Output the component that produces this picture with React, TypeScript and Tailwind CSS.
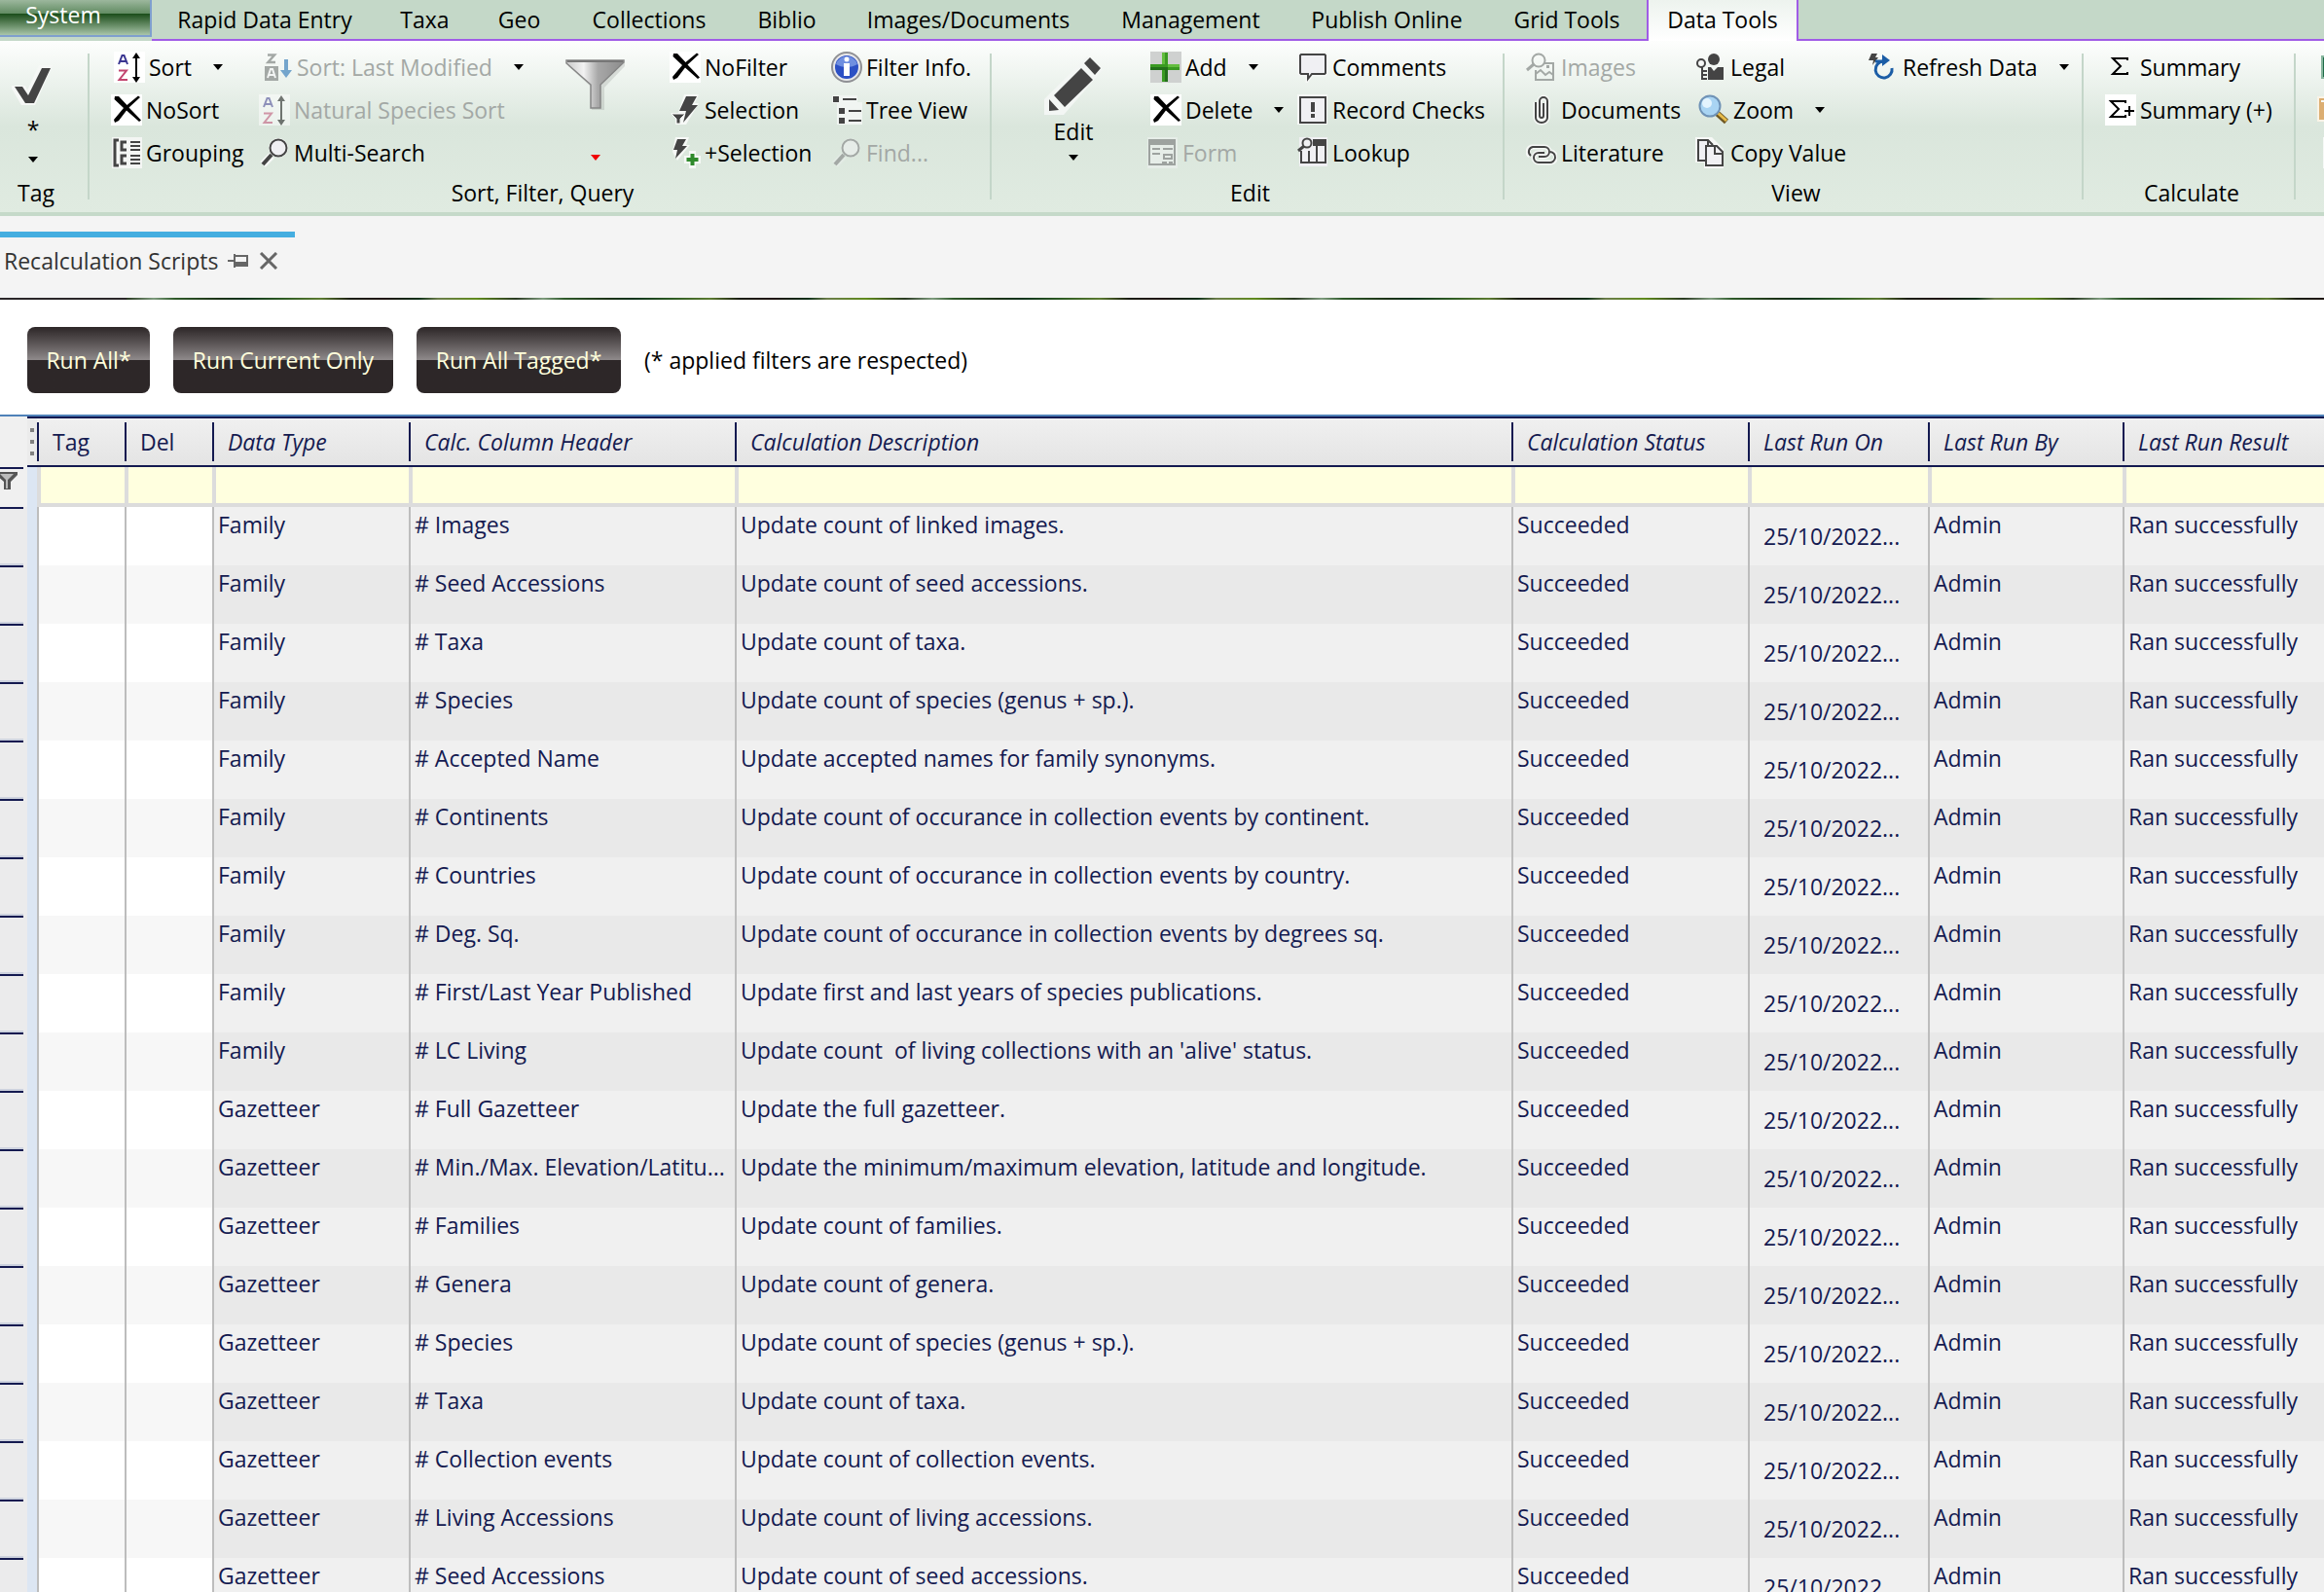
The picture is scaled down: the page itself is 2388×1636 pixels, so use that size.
import { FC, ReactNode } from 'react';

const tabs = [
  { label: 'Rapid Data Entry', width: 'w-[232px]' },
  { label: 'Taxa', width: 'w-[97px]' },
  { label: 'Geo', width: 'w-[97px]' },
  { label: 'Collections', width: 'w-[170px]' },
  { label: 'Biblio', width: 'w-[113px]' },
  { label: 'Images/Documents', width: 'w-[260px]' },
  { label: 'Management', width: 'w-[197px]' },
  { label: 'Publish Online', width: 'w-[206px]' },
  { label: 'Grid Tools', width: 'w-[164px]' },
];

const columns = [
  { label: 'Tag', width: 'w-[90px]', italic: false },
  { label: 'Del', width: 'w-[90px]', italic: false },
  { label: 'Data Type', width: 'w-[202px]', italic: true },
  { label: 'Calc. Column Header', width: 'w-[335px]', italic: true },
  { label: 'Calculation Description', width: 'w-[798px]', italic: true },
  { label: 'Calculation Status', width: 'w-[243px]', italic: true },
  { label: 'Last Run On', width: 'w-[185px]', italic: true },
  { label: 'Last Run By', width: 'w-[200px]', italic: true },
  { label: 'Last Run Result', width: '', italic: true },
];

const scripts = [
  ['Family', '# Images', 'Update count of linked images.'],
  ['Family', '# Seed Accessions', 'Update count of seed accessions.'],
  ['Family', '# Taxa', 'Update count of taxa.'],
  ['Family', '# Species', 'Update count of species (genus + sp.).'],
  ['Family', '# Accepted Name', 'Update accepted names for family synonyms.'],
  ['Family', '# Continents', 'Update count of occurance in collection events by continent.'],
  ['Family', '# Countries', 'Update count of occurance in collection events by country.'],
  ['Family', '# Deg. Sq.', 'Update count of occurance in collection events by degrees sq.'],
  ['Family', '# First/Last Year Published', 'Update first and last years of species publications.'],
  ['Family', '# LC Living', "Update count  of living collections with an 'alive' status."],
  ['Gazetteer', '# Full Gazetteer', 'Update the full gazetteer.'],
  ['Gazetteer', '# Min./Max. Elevation/Latitu...', 'Update the minimum/maximum elevation, latitude and longitude.'],
  ['Gazetteer', '# Families', 'Update count of families.'],
  ['Gazetteer', '# Genera', 'Update count of genera.'],
  ['Gazetteer', '# Species', 'Update count of species (genus + sp.).'],
  ['Gazetteer', '# Taxa', 'Update count of taxa.'],
  ['Gazetteer', '# Collection events', 'Update count of collection events.'],
  ['Gazetteer', '# Living Accessions', 'Update count of living accessions.'],
  ['Gazetteer', '# Seed Accessions', 'Update count of seed accessions.'],
];

interface IconProps {
  children: ReactNode;
}

const Icon: FC<IconProps> = ({ children }) => (
  <svg viewBox="0 0 32 32" className="size-8 shrink-0" fill="none" aria-hidden="true">
    {children}
  </svg>
);

const SortIcon = () => (
  <Icon>
    <path d="M0 0h32v32H0z" fill="#fff" />
    <path d="M5 13l3.500-9h2l3.500 9M6.500 10h6" stroke="#3a3690" strokeWidth="2" />
    <path d="M5 19.500h8L5.500 29H14" stroke="#c2456f" strokeWidth="2" />
    <path d="M23 5v23" stroke="#000" strokeWidth="2" />
    <path d="M23 1l4 6h-8zM23 32l4-6h-8z" fill="#000" />
  </Icon>
);

const SortDescIcon = () => (
  <Icon>
    <path d="M6 3.500h7L6.500 11H14" stroke="#a3a8a5" strokeWidth="2.500" />
    <path d="M3 15h14v15H3z" fill="#a3a8a5" />
    <path d="M6 27l3-9h2l3 9M7 24h6" stroke="#f3f5f4" strokeWidth="2" />
    <path d="M23 8h4v11h4l-6 8-6-8h4z" fill="#74a5cc" />
  </Icon>
);

const CrossIcon = () => (
  <Icon>
    <path d="M0 0h32v32H0z" fill="#fff" />
    <path d="M4 2h4l8.500 9L28 1.500 30 3 18.500 13.500 31 26.500 29 28 16 16.500 8 27l-4 2-1-3 10-12L3.500 5z" fill="#000" />
  </Icon>
);

const GroupingIcon = () => (
  <Icon>
    <path d="M1 0h31v32H1z" fill="#f4f6f4" />
    <path d="M8 3H4v26h4" stroke="#444" strokeWidth="3" />
    <path d="M16 5h-5v8h5M16 19h-5v8h5" stroke="#444" strokeWidth="3" />
    <path d="M20 5h10M20 9h10M20 13h10M20 19h10M20 23h10M20 27h10" stroke="#444" strokeWidth="2" />
  </Icon>
);

const SearchIcon: FC<{ muted?: boolean }> = ({ muted }) => (
  <Icon>
    <path d="M13 19L4 28" stroke={muted ? '#e3ebe5' : '#f6f8f6'} strokeWidth="8" />
    <circle cx="20" cy="11" r="10" fill={muted ? '#e3ebe5' : '#f6f8f6'} />
    <circle cx="20" cy="11" r="8.500" fill={muted ? '#e6ece8' : '#efeff2'} stroke={muted ? '#a3a8a5' : '#444'} strokeWidth="2" />
    <path d="M13 18L4 28" stroke={muted ? '#a3a8a5' : '#444'} strokeWidth="4" />
  </Icon>
);

const SelectionIcon = () => (
  <Icon>
    <path d="M15 0h15l-4 9h4L17 31H6v-7l-5-5h8z" fill="#f6f8f6" />
    <path d="M17 2h11l-5 9h6L14 29l3-12h-7z" fill="#444" />
    <path d="M2 20h14l-5 5v5H7v-5z" fill="#444" stroke="#f6f8f6" strokeWidth="1" />
  </Icon>
);

const AddSelectionIcon = () => (
  <Icon>
    <path d="M6 0h14l-3 8h4L8 24l-5-9z" fill="#f6f8f6" />
    <path d="M8 2h9l-4 7h5L6 22l2-9H4z" fill="#444" />
    <path d="M20 14h7v5h5v8h-5v5h-7v-5h-5v-8h5z" fill="#f6f8f6" />
    <path d="M23.500 17v12M17.500 23h12" stroke="#2f8a2c" strokeWidth="4" />
  </Icon>
);

const InfoIcon = () => (
  <Icon>
    <circle cx="16" cy="16" r="15" fill="#e8e8ea" stroke="#8f9094" strokeWidth="2" />
    <circle cx="16" cy="16" r="12" fill="#2c50c4" />
    <path d="M5 13a11.500 11.500 0 0122 0c-6 4-16 4-22 0z" fill="#6f8fe0" />
    <circle cx="16" cy="8" r="2.500" fill="#fff" />
    <path d="M13 12h6v13h-6z" fill="#fff" />
  </Icon>
);

const TreeIcon = () => (
  <Icon>
    <path d="M1 1h26v7h5v23H6V9H1z" fill="#f1f5f2" />
    <path d="M2 2h6v6H2zM8 14h6v6H8zM8 24h6v6H8z" fill="#444" />
    <path d="M12 5h14M18 17h13M18 27h13" stroke="#444" strokeWidth="2" />
  </Icon>
);

const AddIcon = () => (
  <Icon>
    <path d="M0 0h32v32H0z" fill="#cfd1d0" />
    <path d="M12 1h6v30h-6z" fill="#3a9a22" />
    <path d="M0 13h30v6H0z" fill="#3a9a22" />
    <path d="M0 16h18v3H0zM15 16h3v15h-3z" fill="#23701a" />
    <path d="M18 13h12v3H18zM12 1h3v12h-3z" fill="#63bd3f" />
  </Icon>
);

const FormIcon = () => (
  <Icon>
    <path d="M0 0h31v32H0z" fill="#e6ede8" />
    <path d="M2 3h26v25H2z" stroke="#9da29f" strokeWidth="2" />
    <path d="M1 2h28v6H1z" fill="#9da29f" />
    <path d="M5 12h8M5 17h8M16 12h10M17 18h8v4h-8zM15 26h5M22 26h4" stroke="#9da29f" strokeWidth="2" />
  </Icon>
);

const CommentIcon = () => (
  <Icon>
    <path d="M4 3h24v1l1 1v17l-1 1H15l-4 5v-5H4l-1-1V4z" stroke="#f6f8f6" strokeWidth="5" />
    <path d="M4 3h24l1 1v18l-1 1H15l-4 5v-5H4l-1-1V4z" fill="#f0f0f3" stroke="#444" strokeWidth="2" />
  </Icon>
);

const ChecksIcon = () => (
  <Icon>
    <path d="M0 0h31v31H0z" fill="#f6f8f6" />
    <path d="M3 3h26v26H3z" fill="#f0f0f3" stroke="#444" strokeWidth="2" />
    <path d="M14 8h4v10h-4zM14 20h4v4h-4z" fill="#444" />
  </Icon>
);

const LookupIcon = () => (
  <Icon>
    <path d="M2 0h29v30H2z" fill="#f0f0f3" />
    <path d="M16 2h14v7H16z" fill="#444" />
    <path d="M4 14v12h25V8M12 14v12M20 9v17" stroke="#444" strokeWidth="2" />
    <circle cx="10" cy="6" r="4.500" stroke="#444" strokeWidth="2" />
    <path d="M7 9l-6 5" stroke="#444" strokeWidth="3" />
  </Icon>
);

const ImagesIcon = () => (
  <Icon>
    <circle cx="13" cy="9" r="6.500" stroke="#a3a8a5" strokeWidth="2" />
    <path d="M8 13l-7 6" stroke="#a3a8a5" strokeWidth="3" />
    <path d="M19 12h9v17H10V19" stroke="#a3a8a5" strokeWidth="2" />
    <path d="M10 23l5-4 5 5 4-3 4 3" stroke="#a3a8a5" strokeWidth="2" />
    <path d="M21 14h3v3h-3z" fill="#a3a8a5" />
  </Icon>
);

const ClipIcon = () => (
  <Icon>
    <path d="M10 8v16a6 5 0 0012 0V7a4 4 0 00-8 0v15a2 2 0 004 0V9" stroke="#f6f8f6" strokeWidth="5" />
    <path d="M10 8v16a6 5 0 0012 0V7a4 4 0 00-8 0v15a2 2 0 004 0V9" stroke="#444" strokeWidth="2" />
  </Icon>
);

const LinkIcon = () => (
  <Icon>
    <path d="M4 19a5 5 0 013-9h12a5 5 0 010 10h-5" stroke="#f6f8f6" strokeWidth="5" />
    <path d="M26 15a5 5 0 01-2 11H13a5 5 0 010-10h5" stroke="#f6f8f6" strokeWidth="5" />
    <path d="M5 19a5 5 0 012-9h12a5 5 0 010 10h-6" stroke="#444" strokeWidth="2" />
    <path d="M25 15a5 5 0 01-1 11H13a5 5 0 010-10h6" stroke="#444" strokeWidth="2" />
  </Icon>
);

const LegalIcon = () => (
  <Icon>
    <circle cx="19" cy="8" r="6" fill="#444" />
    <path d="M13 16h3l3 4 4-4h6v13H13z" fill="#444" />
    <circle cx="6" cy="12" r="4" fill="#f6f8f6" stroke="#444" strokeWidth="2" />
    <path d="M7 16v13M7 20h5M7 24h5M7 28h5" stroke="#444" strokeWidth="2" />
  </Icon>
);

const ZoomIcon = () => (
  <Icon>
    <path d="M19 19l10 9" stroke="#6e5723" strokeWidth="6" />
    <path d="M20 19l9 8" stroke="#e8bc4a" strokeWidth="3" />
    <circle cx="12" cy="12" r="10.500" fill="#a9d4f3" stroke="#6f92b6" strokeWidth="2" />
    <circle cx="9" cy="9" r="5" fill="#e4f4fe" />
  </Icon>
);

const CopyIcon = () => (
  <Icon>
    <path d="M0 0h17l12 12v20H9v-6H0z" fill="#f6f8f6" />
    <path d="M10 24H3V3h10l5 5" fill="#f0f0f3" stroke="#444" strokeWidth="2" />
    <path d="M11 9h11l6 6v14H11z" fill="#f0f0f3" stroke="#444" strokeWidth="2" />
    <path d="M20 9v8h8M13 3v6" stroke="#444" strokeWidth="2" />
  </Icon>
);

const RefreshIcon = () => (
  <Icon>
    <path d="M4 2h6L8 6h3l-6 8 1-5H1z" fill="#444" />
    <path d="M16 10a8.500 8.500 0 109 7" stroke="#1b5da6" strokeWidth="3" />
    <path d="M8 10h7" stroke="#1b5da6" strokeWidth="3" />
    <path d="M15 3l8 6-8 6z" fill="#1b5da6" />
  </Icon>
);

const SigmaIcon: FC<{ plus?: boolean }> = ({ plus }) => (
  <Icon>
    <path d="M0 0h32v32H0z" fill={plus ? '#fff' : 'none'} />
    <path d={plus ? 'M21 9V7H6l8 8-8 8h15v-2' : 'M23 9V7H8l8 8-8 8h15v-2'} stroke="#000" strokeWidth="2" />
    {plus && <path d="M20 17h10M25 12v10" stroke="#000" strokeWidth="2" />}
  </Icon>
);

const ExcelIcon = () => (
  <Icon>
    <path d="M4 4h28v24H4z" fill="#86b59d" />
    <path d="M6 6h26v20H6z" fill="#1f6b48" />
  </Icon>
);

const FolderIcon = () => (
  <Icon>
    <path d="M0 2h32v26H0z" fill="#faf3e6" />
    <path d="M2 4h30v22H2z" fill="#dcae72" />
    <path d="M4 6h28v2H4z" fill="#f6f8f6" />
  </Icon>
);

const SheetIcon = () => (
  <Icon>
    <path d="M6 0h26v32H6z" fill="#f6f8f6" />
  </Icon>
);

const FunnelIcon = () => (
  <svg viewBox="0 0 64 56" className="h-14 w-16" aria-hidden="true">
    <defs>
      <linearGradient id="metal" x1="0" x2="1" y1="0" y2="0">
        <stop offset="0" stopColor="#c9c9c9" />
        <stop offset="0.3" stopColor="#f2f2f2" />
        <stop offset="0.55" stopColor="#a8a8a8" />
        <stop offset="1" stopColor="#8c8c8c" />
      </linearGradient>
    </defs>
    <path d="M4 5h58v4L41 31v23H28V31L4 9z" fill="#8b8f8c" opacity="0.25" />
    <path d="M2 3h59v2L37 28v24H27V28L2 6z" fill="url(#metal)" stroke="#858585" strokeWidth="1.500" />
    <path d="M3 4h57" stroke="#777" strokeWidth="2" />
  </svg>
);

const PencilIcon = () => (
  <svg viewBox="0 0 64 64" className="size-16" aria-hidden="true">
    <path d="M46 1l16 14-40 46H2V45z" fill="#f3f6f4" />
    <path d="M49 2l11 11-6 7-11-12zM40 13l12 12-29 28L12 41zM7 45l10 11-10 1z" fill="#444" />
  </svg>
);

const CheckIcon = () => (
  <svg viewBox="0 0 48 48" className="size-12" aria-hidden="true">
    <path d="M30 2h14L26 43H12L2 26V23h14l2 5z" fill="#f6f8f6" />
    <path d="M33 5h9L25 41h-9L5 24h8l6 9z" fill="#444" />
  </svg>
);

const Caret: FC<{ red?: boolean }> = ({ red }) => (
  <svg viewBox="0 0 10 6" className="h-[6px] w-[10px] shrink-0" aria-hidden="true">
    <path d="M0 0h10L5 6z" fill={red ? '#f00000' : '#000'} />
  </svg>
);

interface CommandProps {
  icon: ReactNode;
  label: string;
  menu?: boolean;
  disabled?: boolean;
}

const Command: FC<CommandProps> = ({ icon, label, menu, disabled }) => (
  <button
    type="button"
    className={`flex h-11 items-center gap-1 whitespace-nowrap ${menu ? 'pl-[3px]' : ''} ${disabled ? 'text-[#a3a8a5]' : 'text-black'}`}
  >
    {icon}
    <span>{label}</span>
    {menu && (
      <span className="pl-[18px]">
        <Caret />
      </span>
    )}
  </button>
);

interface GroupProps {
  label: string;
  width: string;
  children: ReactNode;
}

const Group: FC<GroupProps> = ({ label, width, children }) => (
  <>
    <section className={`flex shrink-0 flex-col pt-[5px] ${width}`}>
      <div className="flex h-[132px]">{children}</div>
      <h2 className="flex h-[38px] items-center justify-center pl-[6px]">{label}</h2>
    </section>
    <div className="mt-[13px] h-[150px] w-[2px] shrink-0 bg-[#c4d6c9]" />
  </>
);

const Column: FC<{ width?: string; children: ReactNode }> = ({ width = '', children }) => (
  <div className={`flex shrink-0 flex-col items-start ${width}`}>{children}</div>
);

const RunButton: FC<{ label: string; width: string }> = ({ label, width }) => (
  <button
    type="button"
    className={`h-[68px] rounded-lg bg-linear-to-b from-[#2d2728] from-0% via-[#8f8a8b] via-50% to-[#2d2728] to-50% text-[#ffffdc] ${width}`}
  >
    {label}
  </button>
);

const Ribbon = () => (
  <header>
    <nav className="flex h-[42px] bg-[#c4d8c8]">
      <button
        type="button"
        className="h-[38px] w-[156px] shrink-0 border-r-2 border-b-2 border-[#7f9fce] bg-linear-to-b from-[#9cb79d] from-0% via-[#5f8a60] via-40% to-[#5f8a60] to-40% text-white"
      >
        <span className="flex h-full items-center justify-center bg-linear-to-b from-transparent from-40% via-[#1c4f1c] via-40% to-[#a9c5aa] pr-6 pb-[6px]">
          System
        </span>
      </button>
      <div className="flex border-b-2 border-[#a05ce6]">
        {tabs.map((tab) => (
          <button key={tab.label} type="button" className={`h-10 shrink-0 whitespace-nowrap ${tab.width}`}>
            {tab.label}
          </button>
        ))}
      </div>
      <button type="button" className="h-[42px] w-[156px] shrink-0 border-x-2 border-[#a05ce6] bg-linear-to-b from-[#edf3ee] to-white pb-[2px]">
        Data Tools
      </button>
      <div className="grow border-b-2 border-[#a05ce6]" />
    </nav>

    <div className="flex h-[180px] overflow-hidden border-b-4 border-[#c5d9c9] bg-linear-to-b from-[#fdfefd] via-[#dae6dc] via-50% to-[#e0ebe1]">
      <Group label="Tag" width="w-[90px] pr-[22px]">
        <button type="button" className="flex w-full flex-col items-center pt-[18px]">
          <CheckIcon />
          <span className="flex h-12 items-center pb-2">*</span>
          <Caret />
        </button>
      </Group>

      <Group label="Sort, Filter, Query" width="w-[925px]">
        <div className="w-[22px] shrink-0" />
        <Column width="w-[152px]">
          <Command icon={<SortIcon />} label="Sort" menu />
          <Command icon={<CrossIcon />} label="NoSort" />
          <Command icon={<GroupingIcon />} label="Grouping" />
        </Column>
        <Column width="w-[286px]">
          <Command icon={<SortDescIcon />} label="Sort: Last Modified" menu disabled />
          <Command icon={<span className="flex opacity-50"><SortIcon /></span>} label="Natural Species Sort" disabled />
          <Command icon={<SearchIcon />} label="Multi-Search" />
        </Column>
        <button type="button" aria-label="Filter" className="mr-4 flex w-[120px] flex-col items-center justify-between pt-3 pb-[14px]">
          <FunnelIcon />
          <Caret red />
        </button>
        <Column width="w-[166px]">
          <Command icon={<CrossIcon />} label="NoFilter" />
          <Command icon={<SelectionIcon />} label="Selection" />
          <Command icon={<AddSelectionIcon />} label="+Selection" />
        </Column>
        <Column>
          <Command icon={<InfoIcon />} label="Filter Info." />
          <Command icon={<TreeIcon />} label="Tree View" />
          <Command icon={<SearchIcon muted />} label="Find..." disabled />
        </Column>
      </Group>

      <Group label="Edit" width="w-[525px]">
        <button type="button" className="mr-4 ml-6 flex w-[120px] flex-col items-center pt-[10px]">
          <PencilIcon />
          <span className="pb-[10px] leading-7">Edit</span>
          <Caret />
        </button>
        <Column width="w-[154px]">
          <Command icon={<AddIcon />} label="Add" menu />
          <Command icon={<CrossIcon />} label="Delete" menu />
          <Command icon={<FormIcon />} label="Form" disabled />
        </Column>
        <Column>
          <Command icon={<CommentIcon />} label="Comments" />
          <Command icon={<ChecksIcon />} label="Record Checks" />
          <Command icon={<LookupIcon />} label="Lookup" />
        </Column>
      </Group>

      <Group label="View" width="w-[593px]">
        <div className="w-[22px] shrink-0" />
        <Column width="w-[174px]">
          <Command icon={<ImagesIcon />} label="Images" disabled />
          <Command icon={<ClipIcon />} label="Documents" />
          <Command icon={<LinkIcon />} label="Literature" />
        </Column>
        <Column width="w-[174px]">
          <Command icon={<LegalIcon />} label="Legal" />
          <Command icon={<ZoomIcon />} label="Zoom" menu />
          <Command icon={<CopyIcon />} label="Copy Value" />
        </Column>
        <Column>
          <Command icon={<RefreshIcon />} label="Refresh Data" menu />
        </Column>
      </Group>

      <Group label="Calculate" width="w-[216px]">
        <div className="w-[22px] shrink-0" />
        <Column>
          <Command icon={<SigmaIcon />} label="Summary" />
          <Command icon={<SigmaIcon plus />} label="Summary (+)" />
        </Column>
      </Group>

      <div className="flex flex-col pt-[5px] pl-[22px]">
        <button type="button" aria-label="Excel" className="flex h-11 items-center"><ExcelIcon /></button>
        <button type="button" aria-label="Folder" className="flex h-11 items-center"><FolderIcon /></button>
        <button type="button" aria-label="Sheet" className="flex h-11 items-center"><SheetIcon /></button>
      </div>
    </div>
  </header>
);

const DocumentTabs = () => (
  <div className="shrink-0 bg-[#f4f4f4] pt-4">
    <div className="flex h-[68px] w-[303px] items-center border-t-[6px] border-[#45aee0] pb-[14px] pl-1 text-[#333]">
      <span className="w-[230px] whitespace-nowrap">Recalculation Scripts</span>
      <button type="button" aria-label="Pin">
        <svg viewBox="0 0 22 18" className="h-[18px] w-[22px]" fill="none" stroke="#666" strokeWidth="2">
          <path d="M0 9h7M7 2v14M8 4h12v10H8" />
          <path d="M8 12h12" strokeWidth="4" />
        </svg>
      </button>
      <button type="button" aria-label="Close" className="pl-[10px]">
        <svg viewBox="0 0 20 18" className="h-[18px] w-5" stroke="#666" strokeWidth="3">
          <path d="M2 1l16 16M18 1L2 17" />
        </svg>
      </button>
    </div>
    {/* top edge of the leafy banner */}
    <div className="flex h-[2px]">
      <div className="w-[130px] bg-[#2a2629]" />
      <div className="grow bg-[linear-gradient(90deg,#2a3a22,#7d9a7c_28px,#2f5a2a_50px,#1c3216_95px,#10331c_120px,#2c5a22_160px,#5b7a30_200px,#1a1d10_230px,#20140f_265px,#0d3018_300px,#6b7d4a_320px,#5f8a1c_360px,#2a3a22_400px)] bg-[length:400px_2px]" />
    </div>
  </div>
);

const ScriptTable = () => (
  <table className="w-full table-fixed border-separate border-spacing-0 border-t-2 border-[#4f81b8] text-left text-[#141a50]">
    <colgroup>
      <col className="w-[38px]" />
      {columns.map((column) => (
        <col key={column.label} className={column.width} />
      ))}
    </colgroup>
    <thead>
      <tr className="h-[52px]">
        <td className="bg-[#f0f0f0] p-0">
          <div className="ml-7 flex h-[52px] flex-col items-start justify-center gap-2 border-y-2 border-[#141a50] bg-[#ebebeb] pl-[3px]">
            <span className="size-1 bg-[#808080]" />
            <span className="size-1 bg-[#808080]" />
            <span className="size-1 bg-[#808080]" />
          </div>
        </td>
        {columns.map((column) => (
          <th
            key={column.label}
            scope="col"
            className={`border-y-2 border-[#141a50] bg-linear-to-b from-[#f0f0f0] to-[#e4e4e4] p-0 font-normal ${column.italic ? 'italic' : ''}`}
          >
            <div className="flex h-10 items-center overflow-hidden border-l-2 border-[#141a50] pl-[14px] whitespace-nowrap">
              {column.label}
            </div>
          </th>
        ))}
      </tr>
      <tr className="h-[41px]">
        <td className="bg-[#f0f0f0] p-0">
          <div className="flex h-[41px] justify-between">
            <div className="w-6 border-t-2 border-[#141a50] pt-[3px]">
              <svg viewBox="0 0 18 18" className="size-[18px]" aria-hidden="true">
                <path d="M-4 0h22v3l-7 7v8H4v-8L-4 3z" fill="#555" />
                <path d="M0 2h14l-6 6v9H6V8z" fill="#bbb" />
              </svg>
            </div>
            <div className="w-[10px] bg-[#dce6f3]" />
          </div>
        </td>
        {columns.map((column) => (
          <td key={column.label} className="border-b-4 border-l-4 border-[#dcdcdc] bg-[#ffffdf] p-0">
            <input aria-label={`Filter ${column.label}`} className="block h-[37px] w-full bg-transparent px-2 outline-none" />
          </td>
        ))}
      </tr>
    </thead>
    <tbody>
      {scripts.map(([type, header, description], index) => {
        const odd = index % 2 === 1;
        const flag = `border-l-2 border-[#bdbdbd] p-0 ${odd ? 'bg-[#f7f7f7]' : 'bg-white'}`;
        const cell = `overflow-hidden border-l-2 border-[#bdbdbd] py-0 pr-0 pl-1 align-top leading-9 whitespace-pre ${odd ? 'bg-[#e9e9e9]' : 'bg-[#f0f0f0]'}`;
        return (
          <tr key={index} className="h-[60px]">
            <td className="bg-[#ebebec] p-0">
              <div className="flex h-[60px] justify-between">
                <div className="w-6 border-t-2 border-b-2 border-t-[#141a50] border-b-[#cdd2de]" />
                <div className="w-[10px] bg-[#dce6f3]" />
              </div>
            </td>
            <td className={flag} />
            <td className={flag} />
            <td className={cell}>{type}</td>
            <td className={cell}>{header}</td>
            <td className={cell}>{description}</td>
            <td className={cell}>Succeeded</td>
            <td className={cell}>
              <div className="pt-3 pl-[10px]">25/10/2022...</div>
            </td>
            <td className={cell}>Admin</td>
            <td className={cell}>Ran successfully</td>
          </tr>
        );
      })}
    </tbody>
  </table>
);

const App = () => (
  <div className="flex h-screen flex-col overflow-hidden bg-white font-['Open_Sans','Noto_Sans',sans-serif] text-[23px] leading-8 text-black">
    <Ribbon />
    <DocumentTabs />
    <main>
      <div className="flex h-[118px] items-center gap-6 pt-[6px] pl-7">
        <RunButton label="Run All*" width="w-[126px]" />
        <RunButton label="Run Current Only" width="w-[226px]" />
        <RunButton label="Run All Tagged*" width="w-[210px]" />
        <p>(* applied filters are respected)</p>
      </div>
      <ScriptTable />
    </main>
  </div>
);

export default App;
